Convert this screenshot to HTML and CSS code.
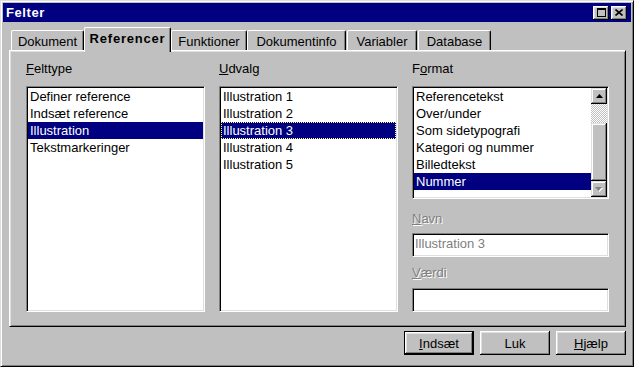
FILE: index.html
```html
<!DOCTYPE html>
<html lang="da">
<head>
    <meta charset="UTF-8">
    <meta name="viewport" content="width=device-width, initial-scale=1.0">
    <title>Felter</title>
    <link rel="stylesheet" href="styles.css">
</head>
<body>
    <div class="window">
        <div class="title-bar">
            <span class="title">Felter</span>
            <div class="title-buttons">
                <div class="title-btn">
                    <svg width="9" height="9" viewBox="0 0 9 9"><rect x="0.5" y="0.5" width="8" height="8" fill="none" stroke="#000"/><rect x="0" y="0" width="9" height="2" fill="#000"/></svg>
                </div>
                <div class="title-btn">
                    <svg width="8" height="7" viewBox="0 0 8 7"><path d="M0.5 0.5L7.5 6.5M7.5 0.5L0.5 6.5" stroke="#000" stroke-width="1.6"/></svg>
                </div>
            </div>
        </div>

        <div class="dialog">
            <div class="tabs">
                <div class="tab tab-dokument">Dokument</div>
                <div class="tab tab-referencer active">Referencer</div>
                <div class="tab tab-funktioner">Funktioner</div>
                <div class="tab tab-dokumentinfo">Dokumentinfo</div>
                <div class="tab tab-variabler">Variabler</div>
                <div class="tab tab-database">Database</div>
            </div>

            <div class="panel">
                <div class="column col-type">
                    <div class="label"><u>F</u>elttype</div>
                    <div class="listbox tall">
                        <ul class="items">
                            <li>Definer reference</li>
                            <li>Indsæt reference</li>
                            <li class="selected">Illustration</li>
                            <li>Tekstmarkeringer</li>
                        </ul>
                    </div>
                </div>

                <div class="column col-select">
                    <div class="label"><u>U</u>dvalg</div>
                    <div class="listbox tall">
                        <ul class="items">
                            <li>Illustration 1</li>
                            <li>Illustration 2</li>
                            <li class="selected focused">Illustration 3</li>
                            <li>Illustration 4</li>
                            <li>Illustration 5</li>
                        </ul>
                    </div>
                </div>

                <div class="column col-format">
                    <div class="label">F<u>o</u>rmat</div>
                    <div class="listbox short">
                        <ul class="items">
                            <li>Referencetekst</li>
                            <li>Over/under</li>
                            <li>Som sidetypografi</li>
                            <li>Kategori og nummer</li>
                            <li>Billedtekst</li>
                            <li class="selected">Nummer</li>
                        </ul>
                        <div class="scrollbar">
                            <div class="scroll-btn">
                                <svg width="7" height="4" viewBox="0 0 7 4"><path d="M3.5 0L7 4H0z" fill="#000"/></svg>
                            </div>
                            <div class="scroll-track"></div>
                            <div class="scroll-thumb"></div>
                            <div class="scroll-btn disabled">
                                <svg width="8" height="5" viewBox="0 0 8 5"><path d="M1 1L8 1L4.5 5z" fill="#fff"/><path d="M0 0H7L3.5 4z" fill="#808080"/></svg>
                            </div>
                        </div>
                    </div>

                    <div class="label disabled field-label"><u>N</u>avn</div>
                    <div class="field disabled-text">Illustration 3</div>

                    <div class="label disabled field-label value-label"><u>V</u>ærdi</div>
                    <div class="field value-field"></div>
                </div>
            </div>

            <div class="buttons">
                <button class="btn default"><u>I</u>ndsæt</button>
                <button class="btn">Luk</button>
                <button class="btn"><u>H</u>jælp</button>
            </div>
        </div>
    </div>
</body>
</html>
```

FILE: styles.css
```css
body {
    margin: 0;
    background: #fff;
    font-family: "Liberation Sans", Arial, sans-serif;
    font-size: 13px;
    color: #000;
}

.window {
    box-sizing: border-box;
    width: 634px;
    height: 367px;
    padding: 2px;
    background: #c0c0c0;
    border: 1px solid;
    border-color: #dfdfdf #000 #000 #dfdfdf;
    box-shadow: inset 1px 1px #fff, inset -1px -1px #808080;
}

/* title bar */
.title-bar {
    display: flex;
    align-items: center;
    justify-content: space-between;
    height: 19px;
    padding: 0 4px 0 3px;
    background: #000080;
}
.title {
    color: #fff;
    font-weight: bold;
    letter-spacing: 0.6px;
    line-height: 19px;
}
.title-buttons {
    display: flex;
    gap: 2px;
}
.title-btn {
    display: flex;
    align-items: center;
    justify-content: center;
    width: 16px;
    height: 14px;
    background: #c0c0c0;
    box-shadow: inset -1px -1px #000, inset 1px 1px #fff, inset -2px -2px #808080, inset 2px 2px #dfdfdf;
}

/* dialog body */
.dialog {
    padding: 5px 5px 0 6px;
}

.tabs {
    display: flex;
    align-items: flex-end;
    height: 23px;
    padding-left: 2px;
}
.tab {
    box-sizing: border-box;
    height: 20px;
    padding-top: 2px;
    line-height: 17px;
    text-align: center;
    white-space: nowrap;
    border-top: 1px solid #fff;
    border-left: 1px solid #fff;
    border-right: 1px solid #000;
    border-radius: 2px 2px 0 0;
    box-shadow: inset -1px 0 #808080;
}
.tab.active {
    position: relative;
    z-index: 1;
    height: 25px;
    margin-bottom: -2px;
    background: #c0c0c0;
    font-weight: bold;
    letter-spacing: 0.8px;
}
.tab-dokument { width: 73px; }
.tab-referencer { width: 87px; }
.tab-funktioner { width: 76px; }
.tab-dokumentinfo { width: 99px; }
.tab-variabler { width: 70px; margin-left: 1px; }
.tab-database { width: 73px; margin-left: 1px; }

.panel {
    box-sizing: border-box;
    display: flex;
    gap: 14px;
    width: 617px;
    height: 277px;
    padding: 9px 16px 0 16px;
    border: 1px solid;
    border-color: #fff #000 #000 #fff;
    box-shadow: inset 1px 1px #dfdfdf, inset -1px -1px #808080;
}

.column {
    display: flex;
    flex-direction: column;
}
.col-type, .col-select { width: 179px; }
.col-format { width: 197px; }

.label {
    line-height: 17px;
    margin-bottom: 9px;
    white-space: nowrap;
}
.label.disabled {
    color: #808080;
    text-shadow: 1px 1px #fff;
}
.field-label {
    margin: 11px 0 6px;
}
.value-label {
    margin: 7px 0 7px;
}

/* list boxes */
.listbox {
    box-sizing: border-box;
    display: flex;
    padding: 1px;
    background: #fff;
    border: 1px solid;
    border-color: #808080 #fff #fff #808080;
    box-shadow: inset 1px 1px #000, inset -1px -1px #dfdfdf;
    overflow: hidden;
}
.listbox.tall { height: 226px; }
.listbox.short { height: 113px; }

.items {
    flex: 1;
    margin: 0;
    padding: 0;
    list-style: none;
}
.items li {
    padding: 0 2px;
    line-height: 17px;
    white-space: nowrap;
}
.items li.selected {
    background: #000080;
    color: #fff;
}
.items li.focused {
    outline: 1px dotted #ffff9c;
    outline-offset: -1px;
}

.scrollbar {
    display: flex;
    flex-direction: column;
    width: 16px;
}
.scroll-btn, .scroll-thumb {
    box-sizing: border-box;
    background: #c0c0c0;
    box-shadow: inset -1px -1px #000, inset 1px 1px #dfdfdf, inset -2px -2px #808080, inset 2px 2px #fff;
}
.scroll-btn {
    display: flex;
    align-items: center;
    justify-content: center;
    height: 16px;
}
.scroll-track {
    height: 19px;
    background: repeating-conic-gradient(#fff 0 25%, #c0c0c0 0 50%) 0 0 / 2px 2px;
}
.scroll-thumb {
    flex: 1;
}

/* edit fields */
.field {
    box-sizing: border-box;
    height: 24px;
    padding: 1px 2px;
    line-height: 17px;
    background: #fff;
    border: 1px solid;
    border-color: #808080 #fff #fff #808080;
    box-shadow: inset 1px 1px #000, inset -1px -1px #dfdfdf;
}
.disabled-text {
    color: #808080;
}

/* bottom buttons */
.buttons {
    display: flex;
    justify-content: flex-end;
    gap: 6px;
    width: 617px;
    margin-top: 4px;
}
.btn {
    box-sizing: border-box;
    width: 70px;
    height: 24px;
    padding: 0;
    font-family: inherit;
    font-size: 13px;
    color: #000;
    background: #c0c0c0;
    border: none;
    box-shadow: inset -1px -1px #000, inset 1px 1px #fff, inset -2px -2px #808080, inset 2px 2px #dfdfdf;
}
.btn.default {
    border: 1px solid #000;
}
```
